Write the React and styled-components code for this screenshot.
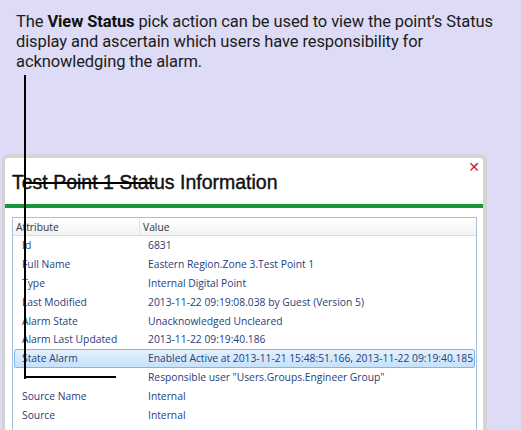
import React from "react";
import styled, { createGlobalStyle } from "styled-components";

const GlobalStyle = createGlobalStyle`
  html, body {
    margin: 0;
    padding: 0;
    background: #dddbf6;
  }
  body {
    width: 521px;
    height: 430px;
    overflow: hidden;
  }
`;

const Page = styled.div`
  position: relative;
  padding: 12px 0 0 0;
  height: 418px;
  overflow: hidden;
`;

const Intro = styled.p`
  margin: 0 0 0 16px;
  width: 500px;
  font-family: Roboto, "Liberation Sans", sans-serif;
  font-size: 16.5px;
  line-height: 20px;
  color: #1c1c1c;
  letter-spacing: -0.1px;

  b {
    font-weight: bold;
    color: #111;
  }
`;

const Dialog = styled.div`
  margin: 82px 0 0 2px;
  width: 478px;
  border: 4px solid #d4d4d4;
  border-bottom: none;
  border-left-width: 3px;
  border-radius: 7px 7px 0 0;
  background: #fff;
  height: 300px;
`;

const TitleBar = styled.div`
  position: relative;
  height: 46px;
  display: flex;
  align-items: center;
  padding-left: 7px;
  padding-top: 2px;
  box-sizing: border-box;
`;

const Title = styled.h2`
  margin: 0;
  font-family: "Liberation Sans", Arial, sans-serif;
  font-size: 19.5px;
  font-weight: normal;
  color: #111;
  -webkit-text-stroke: 0.4px #111;
`;

const Close = styled.span`
  position: absolute;
  right: 3px;
  top: 1px;
  font-family: "DejaVu Sans", sans-serif;
  font-size: 14px;
  font-weight: bold;
  color: #d2143c;
`;

const GreenBar = styled.div`
  height: 4px;
  background: #16973a;
`;

const Table = styled.div`
  margin: 9px 6px 0 7px;
  border: 1px solid #a6c0e2;
  border-bottom: none;
  height: 240px;
  font-family: "Open Sans", "Noto Sans", sans-serif;
  font-size: 10.3px;
`;

const Row = styled.div`
  display: grid;
  grid-template-columns: 127px 1fr;
  height: 18.8px;
  align-items: center;
  margin: 0 1px;
  border: 1px solid ${(p) => (p.selected ? "#86b4e6" : "transparent")};
  border-radius: 2px;
  background: ${(p) =>
    p.selected ? "linear-gradient(#e4f1fd, #c6e1fb)" : "transparent"};
  color: #26407c;
  box-sizing: border-box;
`;

const HeaderRow = styled.div`
  display: grid;
  grid-template-columns: 127px 1fr;
  height: 17px;
  align-items: center;
  background: linear-gradient(#ffffff, #f2f3f5);
  border-bottom: 1px solid #dcdcdc;
  color: #333;
`;

const HeaderCell = styled.div`
  padding-left: 3px;
  height: 100%;
  display: flex;
  align-items: center;
  border-right: ${(p) => (p.first ? "1px solid #e2e2e2" : "none")};
`;

const Cell = styled.div`
  padding-left: ${(p) => (p.value ? 6 : 7)}px;
  white-space: nowrap;
`;

const VLine = styled.div`
  position: absolute;
  left: 24px;
  top: 75px;
  width: 2px;
  height: 304px;
  background: #000;
`;

const HLine = styled.div`
  position: absolute;
  left: ${(p) => p.x}px;
  top: ${(p) => p.y}px;
  width: ${(p) => p.w}px;
  height: 2px;
  background: #000;
`;

const rows = [
  ["Id", "6831"],
  ["Full Name", "Eastern Region.Zone 3.Test Point 1"],
  ["Type", "Internal Digital Point"],
  ["Last Modified", "2013-11-22 09:19:08.038 by Guest (Version 5)"],
  ["Alarm State", "Unacknowledged Uncleared"],
  ["Alarm Last Updated", "2013-11-22 09:19:40.186"],
  [
    "State Alarm",
    "Enabled Active at 2013-11-21 15:48:51.166, 2013-11-22 09:19:40.185",
    true,
  ],
  ["", 'Responsible user "Users.Groups.Engineer Group"'],
  ["Source Name", "Internal"],
  ["Source", "Internal"],
];

export default function App() {
  return (
    <Page>
      <GlobalStyle />
      <Intro>
        The <b>View Status</b> pick action can be used to view the point’s
        Status display and ascertain which users have responsibility for
        acknowledging the alarm.
      </Intro>
      <Dialog>
        <TitleBar>
          <Title>Test Point 1 Status Information</Title>
          <Close>✕</Close>
        </TitleBar>
        <GreenBar />
        <Table>
          <HeaderRow>
            <HeaderCell first>Attribute</HeaderCell>
            <HeaderCell>Value</HeaderCell>
          </HeaderRow>
          {rows.map(([name, value, selected], i) => (
            <Row key={i} selected={selected}>
              <Cell>{name}</Cell>
              <Cell value>{value}</Cell>
            </Row>
          ))}
        </Table>
      </Dialog>
      <VLine />
      <HLine x={24} y={182} w={131} />
      <HLine x={24} y={376} w={92} />
    </Page>
  );
}
